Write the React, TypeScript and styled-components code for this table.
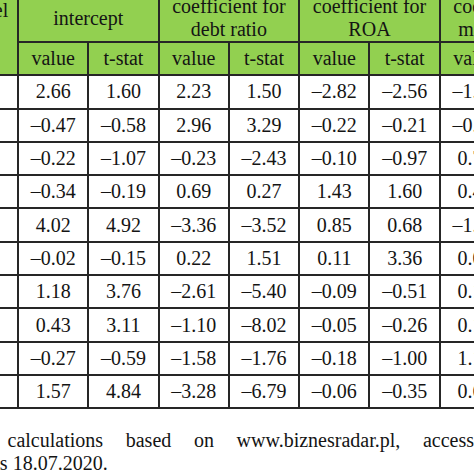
import React from 'react';
import styled, { createGlobalStyle } from 'styled-components';

const GlobalStyle = createGlobalStyle`
  html, body {
    margin: 0;
    padding: 0;
    overflow: hidden;
    background: #ffffff;
  }
  body {
    font-family: "Liberation Serif", "DejaVu Serif", serif;
    color: #141414;
  }
`;

// the picture is a crop of a wider page, so the sheet starts a little outside the window
const Sheet = styled.div`
  margin: -7px 0 0 -58px;
  width: 640px;
  font-family: "Liberation Serif", "DejaVu Serif", serif;
`;

const Table = styled.table`
  border-collapse: collapse;
  table-layout: fixed;
  width: 637px;
  font-family: "Liberation Serif", "DejaVu Serif", serif;
  font-size: 20px;
  line-height: 23px;
  color: #141414;
`;

const HeadRow = styled.tr<{ $height: number }>`
  height: ${(p) => p.$height}px;
`;

const DataRow = styled.tr`
  height: 33.3px;
`;

const HeadCell = styled.th<{ $stub?: boolean }>`
  background: #92d050;
  border: 2px solid #262626;
  font-weight: normal;
  padding: ${(p) => (p.$stub ? '4px 0 0 12px' : '0 2px')};
  text-align: ${(p) => (p.$stub ? 'left' : 'center')};
  vertical-align: ${(p) => (p.$stub ? 'top' : 'middle')};
  white-space: nowrap;
  overflow: hidden;
`;

const Cell = styled.td<{ $stub?: boolean }>`
  border: 2px solid #262626;
  padding: ${(p) => (p.$stub ? '0 0 0 12px' : '0')};
  text-align: ${(p) => (p.$stub ? 'left' : 'center')};
  vertical-align: middle;
  white-space: nowrap;
  overflow: hidden;
`;

const Source = styled.div`
  margin-top: 20px;
  padding-left: 4px;
  width: 528px;
  font-family: "Liberation Serif", "DejaVu Serif", serif;
  font-size: 20px;
  line-height: 23px;
`;

const SourceLine = styled.div<{ $justify?: boolean }>`
  text-align: ${(p) => (p.$justify ? 'justify' : 'left')};
  text-align-last: ${(p) => (p.$justify ? 'justify' : 'left')};
  white-space: nowrap;
`;

const groups = [
  ['intercept'],
  ['coefficient for', 'debt ratio'],
  ['coefficient for', 'ROA'],
  ['coefficient for', 'market value'],
];

const rows: [string, string[]][] = [
  ['2010', ['2.66', '1.60', '2.23', '1.50', '–2.82', '–2.56', '–1.23', '–1.87']],
  ['2011', ['–0.47', '–0.58', '2.96', '3.29', '–0.22', '–0.21', '–0.45', '–0.93']],
  ['2012', ['–0.22', '–1.07', '–0.23', '–2.43', '–0.10', '–0.97', '0.71', '1.42']],
  ['2013', ['–0.34', '–0.19', '0.69', '0.27', '1.43', '1.60', '0.42', '0.88']],
  ['2014', ['4.02', '4.92', '–3.36', '–3.52', '0.85', '0.68', '–1.08', '–2.14']],
  ['2015', ['–0.02', '–0.15', '0.22', '1.51', '0.11', '3.36', '0.05', '0.31']],
  ['2016', ['1.18', '3.76', '–2.61', '–5.40', '–0.09', '–0.51', '0.13', '1.96']],
  ['2017', ['0.43', '3.11', '–1.10', '–8.02', '–0.05', '–0.26', '0.17', '2.45']],
  ['2018', ['–0.27', '–0.59', '–1.58', '–1.76', '–0.18', '–1.00', '1.12', '3.07']],
  ['2019', ['1.57', '4.84', '–3.28', '–6.79', '–0.06', '–0.35', '0.64', '1.73']],
];

const App = () => {
  return (
    <>
      <GlobalStyle />
      <Sheet>
        <Table>
          <colgroup>
            <col style={{ width: 75 }} />
            {Array.from({ length: 8 }).map((_, i) => (
              <col key={i} style={{ width: 70.3 }} />
            ))}
          </colgroup>
          <thead>
            <HeadRow $height={47.7}>
              <HeadCell $stub rowSpan={2}>
                Model
              </HeadCell>
              {groups.map((lines, i) => (
                <HeadCell key={i} colSpan={2}>
                  {lines.map((line, j) => (
                    <div key={j}>{line}</div>
                  ))}
                </HeadCell>
              ))}
            </HeadRow>
            <HeadRow $height={33.3}>
              {groups.map((_, i) => (
                <React.Fragment key={i}>
                  <HeadCell>value</HeadCell>
                  <HeadCell>t-stat</HeadCell>
                </React.Fragment>
              ))}
            </HeadRow>
          </thead>
          <tbody>
            {rows.map(([label, values]) => (
              <DataRow key={label}>
                <Cell $stub>{label}</Cell>
                {values.map((v, i) => (
                  <Cell key={i}>{v}</Cell>
                ))}
              </DataRow>
            ))}
          </tbody>
        </Table>
        <Source>
          <SourceLine $justify>Own calculations based on www.biznesradar.pl, access</SourceLine>
          <SourceLine>valid as 18.07.2020.</SourceLine>
        </Source>
      </Sheet>
    </>
  );
};

export default App;
